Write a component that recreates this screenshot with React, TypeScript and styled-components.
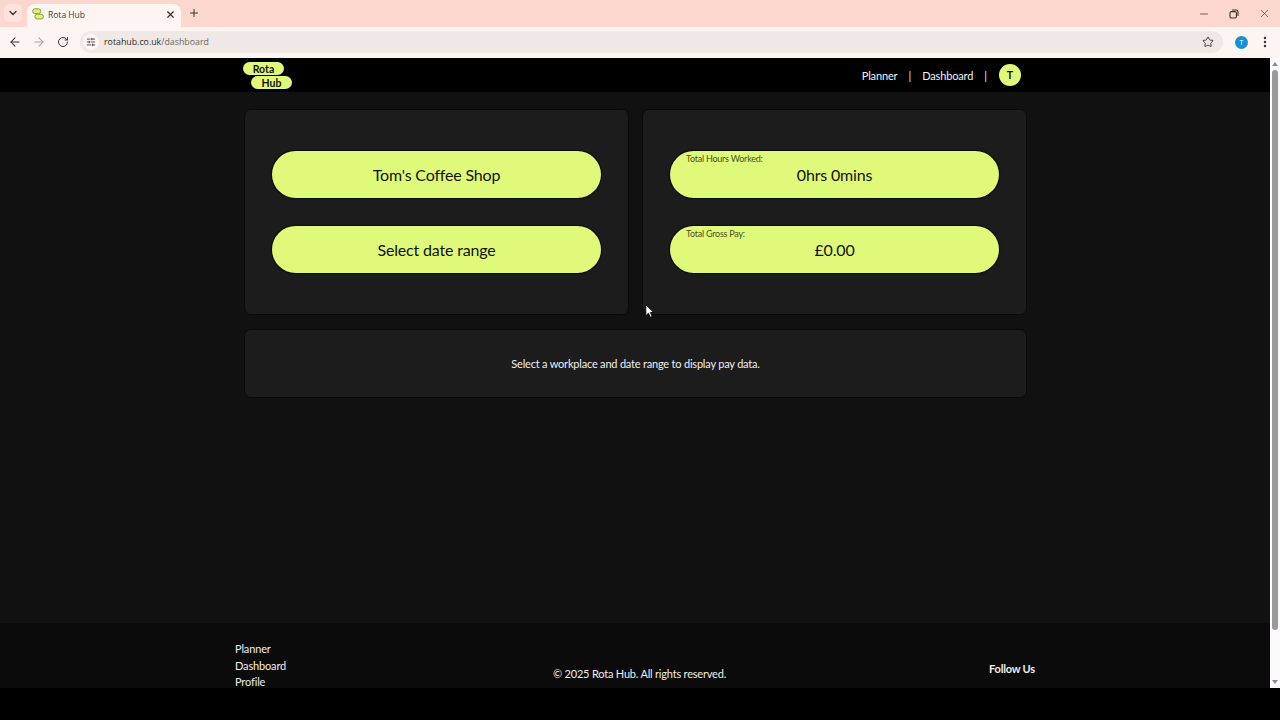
import styled, { createGlobalStyle } from "styled-components";
import {
  ArrowLeft,
  ArrowRight,
  ChevronDown,
  EllipsisVertical,
  Minus,
  Plus,
  RotateCw,
  SlidersHorizontal,
  Star,
  X,
} from "lucide-react";

const GlobalStyle = createGlobalStyle`
  html, body {
    margin: 0;
    height: 100%;
    overflow: hidden;
    background: #000;
  }
  * {
    box-sizing: border-box;
  }
  body {
    font-family: Lato, "Open Sans", sans-serif;
  }
`;

const lime = "#dff97a";

function RestoreIcon() {
  return (
    <svg width="10" height="10" viewBox="0 0 10 10" fill="none" stroke="#3a3231" strokeWidth="1.1">
      <rect x="1" y="2.6" width="6.4" height="6.4" rx="1.4" />
      <path d="M3 1h4.2A1.8 1.8 0 0 1 9 2.8V7" />
    </svg>
  );
}

function Favicon() {
  return (
    <svg width="12" height="12" viewBox="0 0 12 12" fill="#dff07e" stroke="#7d9b35" strokeWidth="0.9">
      <rect x="0.6" y="0.8" width="8.2" height="4.8" rx="2.4" />
      <rect x="2.8" y="6.2" width="8.6" height="4.8" rx="2.4" />
    </svg>
  );
}

export default function App() {
  return (
    <Screen>
      <GlobalStyle />
      <TabStrip>
        <TabSearch>
          <ChevronDown size={12} strokeWidth={2.6} />
        </TabSearch>
        <Tab>
          <Favicon />
          <TabTitle>Rota Hub</TabTitle>
          <X size={11} strokeWidth={2.4} color="#2d2a2a" />
        </Tab>
        <NewTab>
          <Plus size={12} strokeWidth={2} />
        </NewTab>
        <WindowControls>
          <Minus size={12} strokeWidth={1.4} />
          <RestoreIcon />
          <X size={13} strokeWidth={1.2} />
        </WindowControls>
      </TabStrip>

      <Toolbar>
        <NavIcon>
          <ArrowLeft size={14} strokeWidth={1.8} />
        </NavIcon>
        <NavIcon $disabled>
          <ArrowRight size={14} strokeWidth={1.8} />
        </NavIcon>
        <NavIcon>
          <RotateCw size={12} strokeWidth={2} />
        </NavIcon>
        <AddressBar>
          <SiteInfo>
            <SlidersHorizontal size={10} strokeWidth={2} />
          </SiteInfo>
          <Url>
            rotahub.co.uk<UrlPath>/dashboard</UrlPath>
          </Url>
          <Star size={12} strokeWidth={1.8} color="#2f2a2a" />
        </AddressBar>
        <ProfileBadge>T</ProfileBadge>
        <MenuButton>
          <EllipsisVertical size={14} strokeWidth={2.2} />
        </MenuButton>
      </Toolbar>

      <Viewport>
        <Page>
          <Header>
            <HeaderInner>
              <Logo>
                <LogoPill>Rota</LogoPill>
                <LogoPill $shift>Hub</LogoPill>
              </Logo>
              <Nav>
                <NavLink>Planner</NavLink>
                <NavDivider>|</NavDivider>
                <NavLink>Dashboard</NavLink>
                <NavDivider>|</NavDivider>
                <Avatar>T</Avatar>
              </Nav>
            </HeaderInner>
          </Header>

          <Main>
            <CardGrid>
              <Card>
                <Pill>Tom's Coffee Shop</Pill>
                <Pill>Select date range</Pill>
              </Card>
              <Card>
                <Pill>
                  <PillLabel>Total Hours Worked:</PillLabel>
                  0hrs 0mins
                </Pill>
                <Pill>
                  <PillLabel>Total Gross Pay:</PillLabel>
                  £0.00
                </Pill>
              </Card>
            </CardGrid>
            <MessageCard>Select a workplace and date range to display pay data.</MessageCard>
          </Main>

          <Footer>
            <FooterInner>
              <FooterLinks>
                <FooterLink>Planner</FooterLink>
                <FooterLink>Dashboard</FooterLink>
                <FooterLink>Profile</FooterLink>
              </FooterLinks>
              <Copyright>© 2025 Rota Hub. All rights reserved.</Copyright>
              <FollowUs>Follow Us</FollowUs>
            </FooterInner>
          </Footer>

          <Cursor viewBox="0 0 12 18" width="10" height="15">
            <path d="M1 1v13l3.2-3 2.2 5 2.2-1-2.2-4.8H10.500z" fill="#fff" stroke="#000" strokeWidth="1" />
          </Cursor>
        </Page>
        <Scrollbar>
          <ScrollArrow $up />
          <ScrollTrack>
            <ScrollThumb />
          </ScrollTrack>
          <ScrollArrow />
        </Scrollbar>
      </Viewport>
      <BottomBand />
    </Screen>
  );
}

const Screen = styled.div`
  width: 1280px;
  height: 720px;
  display: flex;
  flex-direction: column;
  overflow: hidden;
  background: #000;
`;

const TabStrip = styled.div`
  height: 27px;
  flex: none;
  display: flex;
  align-items: flex-end;
  background: #fbd7ce;
  color: #3a3231;
`;

const TabSearch = styled.div`
  width: 18px;
  height: 18px;
  margin: 0 5px 5px 4px;
  border-radius: 5px;
  background: #fde3dc;
  display: flex;
  align-items: center;
  justify-content: center;
`;

const Tab = styled.div`
  width: 154px;
  height: 23px;
  padding: 0 5px 3px 5px;
  border-radius: 8px 8px 0 0;
  background: #fdf5f2;
  display: flex;
  align-items: center;
  gap: 4px;
`;

const TabTitle = styled.span`
  flex: 1;
  font-family: "Open Sans", sans-serif;
  font-size: 8.5px;
  color: #3f3a39;
`;

const NewTab = styled.div`
  width: 18px;
  height: 18px;
  margin: 0 0 5px 4px;
  display: flex;
  align-items: center;
  justify-content: center;
`;

const WindowControls = styled.div`
  margin: 0 0 7px auto;
  padding-right: 9px;
  display: flex;
  align-items: center;
  gap: 19px;
`;

const Toolbar = styled.div`
  height: 31px;
  flex: none;
  padding: 0 8px 1px 3px;
  display: flex;
  align-items: center;
  background: #fdf5f2;
  color: #3a3231;
`;

const NavIcon = styled.div<{ $disabled?: boolean }>`
  width: 24px;
  display: flex;
  justify-content: center;
  color: ${(p) => (p.$disabled ? "#a8a2a0" : "#3a3231")};
`;

const AddressBar = styled.div`
  flex: 1;
  height: 22px;
  margin-left: 5px;
  margin-right: 12px;
  padding: 0 9px 0 3px;
  border-radius: 11px;
  background: #f0e8e5;
  display: flex;
  align-items: center;
`;

const SiteInfo = styled.div`
  width: 16px;
  height: 16px;
  border-radius: 50%;
  background: #fdf8f6;
  display: flex;
  align-items: center;
  justify-content: center;
`;

const Url = styled.span`
  flex: 1;
  margin-left: 5px;
  font-family: "Open Sans", sans-serif;
  font-size: 8.8px;
  color: #2f2a2a;
`;

const UrlPath = styled.span`
  color: #6d6766;
`;

const ProfileBadge = styled.div`
  width: 13px;
  height: 13px;
  border-radius: 50%;
  background: #178fd0;
  color: #fff;
  font-family: "Open Sans", sans-serif;
  font-size: 7px;
  display: flex;
  align-items: center;
  justify-content: center;
`;

const MenuButton = styled.div`
  margin-left: 10px;
  display: flex;
`;

const Viewport = styled.div`
  height: 630px;
  flex: none;
  display: flex;
`;

const Page = styled.div`
  position: relative;
  flex: 1;
  display: flex;
  flex-direction: column;
  overflow: hidden;
  background: #111;
`;

const Header = styled.header`
  height: 34px;
  flex: none;
  background: #000;
`;

const HeaderInner = styled.div`
  width: 783px;
  height: 100%;
  margin-left: 243px;
  display: flex;
  align-items: center;
  justify-content: space-between;
`;

const Logo = styled.div`
  display: flex;
  flex-direction: column;
  gap: 1px;
`;

const LogoPill = styled.div<{ $shift?: boolean }>`
  width: 41px;
  height: 13px;
  margin-left: ${(p) => (p.$shift ? "8px" : "0")};
  border-radius: 7px;
  background: ${lime};
  color: #111;
  font-size: 10.5px;
  font-weight: 700;
  line-height: 14px;
  text-align: center;
`;

const Nav = styled.nav`
  display: flex;
  align-items: center;
  margin-right: 5px;
`;

const NavLink = styled.span`
  color: #f2f2f2;
  font-size: 11px;
  letter-spacing: -0.15px;
`;

const NavDivider = styled.span`
  margin: 0 11px;
  color: #eee;
  font-size: 11px;
`;

const Avatar = styled.div`
  width: 22px;
  height: 22px;
  margin-left: 1px;
  border-radius: 50%;
  background: ${lime};
  color: #111;
  font-size: 10.5px;
  font-weight: 700;
  display: flex;
  align-items: center;
  justify-content: center;
`;

const Main = styled.main`
  flex: 1;
  padding: 17px 0 0 244px;
  display: flex;
  flex-direction: column;
  gap: 14px;
`;

const CardGrid = styled.div`
  width: 783px;
  display: grid;
  grid-template-columns: 385px 385px;
  justify-content: space-between;
`;

const Card = styled.section`
  height: 206px;
  padding: 41px 27px;
  border: 1px solid #0a0a0a;
  border-radius: 7px;
  background: #1c1c1d;
  display: flex;
  flex-direction: column;
  gap: 28px;
`;

const Pill = styled.div`
  position: relative;
  height: 47px;
  flex: none;
  border-radius: 24px;
  background: ${lime};
  box-shadow: 0 0 1px 1px #0a0a0a;
  color: #12140a;
  font-size: 16px;
  letter-spacing: -0.18px;
  display: flex;
  align-items: center;
  justify-content: center;
`;

const PillLabel = styled.span`
  position: absolute;
  top: 2px;
  left: 16px;
  color: #4a5220;
  font-size: 9px;
  letter-spacing: -0.24px;
`;

const MessageCard = styled.section`
  width: 783px;
  height: 69px;
  border: 1px solid #0a0a0a;
  border-radius: 7px;
  background: #1c1c1d;
  color: #f0f0f0;
  font-size: 11px;
  letter-spacing: -0.2px;
  display: flex;
  align-items: center;
  justify-content: center;
`;

const Footer = styled.footer`
  height: 65px;
  flex: none;
  overflow: hidden;
  background: #0b0b0b;
`;

const FooterInner = styled.div`
  width: 800px;
  margin-left: 235px;
  padding-top: 18px;
  display: flex;
  justify-content: space-between;
`;

const FooterLinks = styled.div`
  display: flex;
  flex-direction: column;
  color: #eee;
  font-size: 11px;
  letter-spacing: -0.15px;
  line-height: 16.6px;
`;

const FooterLink = styled.span``;

const Copyright = styled.div`
  margin: 26px 0 0 4px;
  color: #eee;
  font-size: 11px;
  letter-spacing: -0.2px;
`;

const FollowUs = styled.div`
  margin-top: 21px;
  color: #eee;
  font-size: 11px;
  font-weight: 700;
  letter-spacing: -0.2px;
`;

const Cursor = styled.svg`
  position: absolute;
  left: 645px;
  top: 246px;
`;

const Scrollbar = styled.div`
  width: 10px;
  flex: none;
  display: flex;
  flex-direction: column;
  background: #fbf9fb;
`;

const ScrollArrow = styled.div<{ $up?: boolean }>`
  height: 12px;
  flex: none;
  display: flex;
  align-items: center;
  justify-content: center;
  &::before {
    content: "";
    border-left: 3.5px solid transparent;
    border-right: 3.5px solid transparent;
    ${(p) => (p.$up ? "border-bottom" : "border-top")}: 4px solid #8a8a8a;
  }
`;

const ScrollTrack = styled.div`
  flex: 1;
  display: flex;
  justify-content: center;
`;

const ScrollThumb = styled.div`
  width: 6px;
  height: 560px;
  border-radius: 3px;
  background: #999;
`;

const BottomBand = styled.div`
  flex: 1;
  background: #000;
`;
